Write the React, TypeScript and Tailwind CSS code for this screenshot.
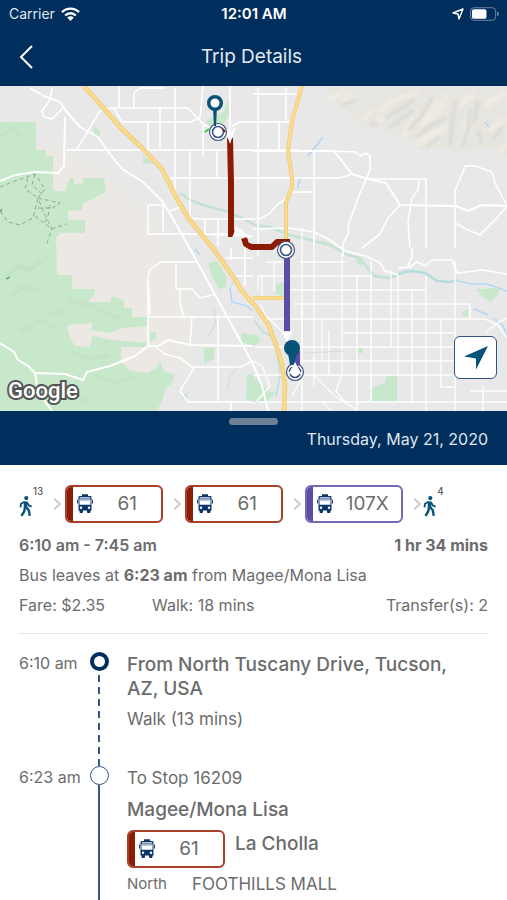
import React from 'react';

type Tone = 'red' | 'purple';

interface Leg {
  id: number;
  route: string;
  tone: Tone;
}

const LEGS: Leg[] = [
  { id: 1, route: '61', tone: 'red' },
  { id: 2, route: '61', tone: 'red' },
  { id: 3, route: '107X', tone: 'purple' },
];

const MAJOR_ROADS = [
  'M30 2 44 10 60 16 66 25 80 41 98 51 110 68 122 83 143 96 163 116 180 145 195 172 213 205 235 245 253 278 262 300 268 325',
  'M0 95 15 89 35 86 58 87 64 80 65 31',
  'M0 257 14 266 18 274 28 280 35 287 65 288 83 294 87 286 110 280 135 270 148 260 158 260 168 254 190 259 253 260',
  'M35 287 38 305 45 315 52 325',
  'M253 65H334L352 88 368 93 386 97 400 119 456 120 468 125 482 119 507 120',
];

const ROADS = [
  'M52 2 50 14 42 25 44 31 52 33 63 22',
  'M77 63 100 25 112 22H188L204 39 215 43',
  'M119 0V22M134 22V7L140 2H165M114 22 122 36H190L200 32 203 0M148 36V64M160 22V64',
  'M175 2V110M190 64V133M203 70V40M217 64V92M230 0V150M66 64H300M170 92H288M232 40 240 36H290',
  'M148 119H163V145M148 119V148H200M168 126 180 121M205 133V148H240M218 133V160M200 148 253 150',
  'M175 110 190 132 200 133 230 133 253 133 260 133 270 127 278 118 286 113',
  'M258 2V170M286 2V36M279 36V64M253 8H297M253 92H340L352 88M292 106H314M314 66V160',
  'M334 65 356 66 360 70 366 67 370 70 370 84 366 93 357 115 348 140 349 146 343 158 343 170',
  'M368 93H426V162M419 94 418 104 412 112 408 135 410 161M400 119 388 132 380 148 362 162',
  'M455 162V105L463 86 465 80 475 80 492 86 495 97 507 120 497 132 480 149 468 144 455 137',
  'M148 260V192L150 228M148 190 150 184 160 176H197M176 176V203L180 204 180 218 184 232M176 203H192L200 212 215 208',
  'M148 231H253M192 231 190 258M218 232V316M155 260 165 268 180 272 192 281H240L253 275M194 282 180 305 188 316H253M231 316V325',
  'M225 172H253M230 190H253M231 162V174M245 162V200',
  'M253 143 290 142 314 146 330 154 345 165 366 170 380 177 385 185 398 189',
  'M408 180 412 170 412 162M398 182 410 181 417 176 425 180 432 174H452L457 187 483 184 507 188',
];

const CITY_GRID = [
  'M300 176H345M288 190H372M290 204H426M294 218H470M265 233H485L498 239 507 252M343 247H455M255 261H455M300 275H475M297 289H455M258 316H507',
  'M302 142V310M314 150V300M322 234V275M329 244V289M342 168V289M357 190V325M371 175V316M391 185V261M398 188V289M412 204V316M426 190V325M441 233V301H455M455 175V325M470 218V233M483 300V325',
  'M314 289 335 310 358 325M342 289 336 305 345 316M253 289H282M260 218 266 230 284 247M262 190V214M274 176V205M302 218V260M253 275 262 280 270 300 254 318',
  'M485 247 497 237 507 232M470 305H507M302 300V325M292 310 300 295M322 316 332 325M258 204V190H284M266 176H284',
];

const I10 =
  'M84 0 100 18 120 41 141 61 162 83 176 111 189 133 202 149 215 165 234 192 242 205 256 221 268 238 276 259 282 278 285 298 284 325';
const ORACLE_ROAD = 'M302 0 292 35 288 65 292 92 292 101 286 117 286 160M253 212H285';

const BusIcon = () => (
  <svg className="h-5 w-4 shrink-0" viewBox="0 0 16 20" aria-hidden="true">
    <path fill="#0b3568" d="M5 0.300h6v1.700h2.500q1 0 1 1V16.500h-1V18q0 1-1 1H11q-1 0-1-1V16.500H6V18q0 1-1 1H3.500q-1 0-1-1V16.500h-1V3q0-1 1-1H5z" />
    <path fill="#eef3f8" d="M2.700 3.200h10.600v1.300H2.700z" />
    <path fill="#fff" d="M2.500 5.500h11v5.300h-11z" />
    <path fill="#b9c8da" d="M2.500 5.500h11v1.500h-11z" />
    <path fill="#0b3568" d="M0 5.500h.9v4H0zM15.100 5.500h.9v4h-.9z" />
    <circle cx="4" cy="13.700" r="1.200" fill="#fff" />
    <circle cx="12" cy="13.700" r="1.200" fill="#fff" />
  </svg>
);

const WalkIcon = () => (
  <svg className="h-[22px] w-[14px]" viewBox="0 0 15 24" aria-hidden="true">
    <circle cx="7.800" cy="3.300" r="2.300" fill="#075379" />
    <g fill="none" stroke="#075379" strokeLinejoin="round">
      <path strokeWidth="4" d="M7 7v7" />
      <path strokeWidth="2" d="M6 7.300 2 9.500 1.500 13.500M8.500 8l2.200 3.500 3 1.200" />
      <path strokeWidth="2.600" d="M6.500 13.500 5.500 18l-3 4.700M8 13.500l2.700 3.500.8 5.700" />
    </g>
  </svg>
);

const Chevron = () => (
  <svg className="h-3 w-2 shrink-0" viewBox="0 0 8 12" fill="none" stroke="#bdbdbd" strokeWidth="1.500" aria-hidden="true">
    <path d="M1 0.500 7 6l-6 5.500" />
  </svg>
);

const WalkLeg: React.FC<{ minutes: number }> = ({ minutes }) => (
  <div className="flex h-full items-start">
    <div className="pt-2.5">
      <WalkIcon />
    </div>
    <span className="text-[10px] leading-3 text-[#444]">{minutes}</span>
  </div>
);

const RouteBadge: React.FC<{ route: string; tone: Tone }> = ({ route, tone }) => (
  <div
    className={`flex h-[38px] w-[98px] shrink-0 items-center overflow-hidden rounded-md border-2 bg-white ${
      tone === 'red' ? 'border-[#a64029]' : 'border-[#7468b7]'
    }`}
  >
    <span className={`h-full w-[6px] ${tone === 'red' ? 'bg-[#8a1b04]' : 'bg-[#594ca3]'}`} />
    <span className="ml-1">
      <BusIcon />
    </span>
    <span className="flex-1 text-center text-[19px] text-[#6c6c6c]">{route}</span>
  </div>
);

const StopMarker: React.FC<{ x: number; y: number }> = ({ x, y }) => (
  <g fill="#fff" stroke="#3c5582">
    <circle cx={x} cy={y} r="8.500" strokeWidth="1.200" />
    <circle cx={x} cy={y} r="5.500" strokeWidth="1.600" />
  </g>
);

const MapView = () => (
  <section aria-label="Trip map" className="relative">
    <svg className="block w-full" viewBox="0 0 507 325" aria-hidden="true">
      <defs>
        <filter id="soft" x="-10%" y="-10%" width="120%" height="120%">
          <feGaussianBlur stdDeviation="1.200" />
        </filter>
        <filter id="wide" x="-20%" y="-20%" width="140%" height="140%">
          <feGaussianBlur stdDeviation="8" />
        </filter>
      </defs>
      <rect width="507" height="325" fill="#e8e8e8" />
      <path fill="#ece9e4" filter="url(#wide)" d="M0 55 60 60 105 90 150 130 180 185 190 250 180 290 100 300 0 250z" />

      {/* Mountains */}
      <g filter="url(#soft)">
        <path fill="#e6e5df" d="M322 2H507V72L490 60 470 66 440 62 420 64 405 52 385 45 360 38 345 22z" />
        <g fill="none" stroke="#edebe2" strokeWidth="5">
          <path d="M327 14 345 5M343 18 352 6M362 35 372 24M378 26 398 12 420 6M376 36 384 32M402 50 418 36 438 26 448 10M415 60 432 50 448 42M424 32 440 14M460 20 474 8M463 44 470 30M484 22 506 6M488 44 506 32M497 68 507 58" />
        </g>
        <g fill="none" stroke="#dedcd6" strokeWidth="4">
          <path d="M340 20 356 14M370 40 378 36M386 32 402 22 414 14M390 42 402 32 414 24M408 44 422 30 432 12M416 52 430 40 446 32M426 62 440 50M450 60 452 36 456 14M462 62 468 44 470 22M474 36 478 14M482 58 478 44M492 54 502 42" />
        </g>
        <g fill="none" stroke="#f0eee6" strokeWidth="2">
          <path d="M406 42 414 30M420 40 438 30M412 56 446 40M380 22 394 14M486 16 500 8M440 10 446 6M464 14 468 8" />
        </g>
      </g>

      {/* Parks */}
      <g fill="#c7e8ca">
        <path d="M0 36H36V64H46V70H53V105H66V102L70 92H74V98H83V92H104L106 106 95 112 82 118V124L68 125V134H85V147H60L56 152 57 189H72V203H95V207L88 216H110L112 210 124 214V222H132V231H148V240L122 242 110 247 92 244V237L67 239 70 252 75 260 90 261 92 250 112 254 148 257 145 261H121V275L130 285 148 287 156 282 160 275 164 286 175 288 172 297 165 303 162 316 156 325H0z" />
        <path d="M208 177 217 175 226 190 226 201 219 203 212 190zM204 262H214V273L204 278zM150 246H156V252L150 256zM247 289 254 287V315L246 314zM242 246 254 250V260L240 256zM187 306V315L182 312z" />
        <path d="M206 35 224 25 228 12 229 28 221 43 209 42zM143 70 155 78 143 77zM93 39 100 46 99 52 94 47z" />
        <path d="M253 290 268 305 276 307 278 302 268 315 253 316zM276 199 284 196V211L276 208zM253 248 261 252 257 259H253zM372 302 386 296V289H397V315H372zM357 262H363V267H357zM476 203 500 202 497 210 490 216 482 210zM462 226 468 223V231L462 229zM357 172 364 175 361 181 356 176zM322 154 328 157 325 160z" />
      </g>
      <g fill="none" stroke="#b5d8b7" strokeWidth="3" opacity=".35" filter="url(#soft)">
        <path d="M0 50 12 43 20 50M5 190 20 180 30 184 48 170M70 265 85 272 110 270M78 310 90 316M70 215 90 219 120 233M10 210 25 200 38 205M20 245 40 235 58 242M95 290 115 296 135 292M50 230 65 224" />
      </g>
      <g fill="none" stroke="#86ae8c" strokeWidth="1" strokeDasharray="4 3">
        <path d="M0 101 15 95 35 88 45 103 38 112 44 127 52 143 46 160M28 92 25 103 38 112 33 132 20 139 8 136 1 126M38 112 60 117 52 122 35 122M35 88 32 99 42 108M35 130 52 143 66 138M50 119 48 130 44 138" />
      </g>
      <path d="M6 193 10 191M0 126 2 123" stroke="#6da87a" strokeWidth="1.500" />

      {/* Rivers */}
      <g fill="none">
        <path stroke="#c3e2d2" strokeWidth="2.500" d="M180 107 188 113 203 119 225 125 240 131 255 139 270 141 290 149 315 155 330 159 348 169 360 172 369 184 375 190 389 192" />
        <path stroke="#b5dcdd" strokeWidth="2.500" d="M389 192 404 186 413 185 425 187 437 195 449 196 458 194" />
        <path stroke="#b2d6f5" strokeWidth="1.500" d="M458 195 472 198 487 198 507 205M474 223 488 229M493 232 503 240 507 249M308 70 323 51M297 102 301 91M485 36 489 41M230 202 232 216 247 220 253 225M195 163 200 169" />
        <path stroke="#c3dcf2" strokeWidth="1" d="M236 190 230 202M214 221 216 237 208 251M227 304 230 290 238 281" />
        <path stroke="#c4e0d8" strokeWidth="2" d="M254 234 262 245 274 252 277 264 280 290 276 310" />
      </g>

      {/* Streets */}
      <g fill="none" stroke="#fff" strokeLinejoin="round">
        {CITY_GRID.map((d) => (
          <path key={d} d={d} strokeWidth="1.400" opacity=".9" />
        ))}
        {ROADS.map((d) => (
          <path key={d} d={d} strokeWidth="1.600" />
        ))}
        {MAJOR_ROADS.map((d) => (
          <path key={d} d={d} strokeWidth="2" />
        ))}
      </g>
      <path d="M305 267 345 265" stroke="#dadada" />

      {/* Highways */}
      <g fill="none" strokeLinejoin="round">
        <g stroke="#ecc976">
          <path d={I10} strokeWidth="4.600" />
          <path d={ORACLE_ROAD} strokeWidth="4" />
        </g>
        <g stroke="#fbdb8b">
          <path d={I10} strokeWidth="3" />
          <path d={ORACLE_ROAD} strokeWidth="2.800" />
        </g>
      </g>

      {/* Planned route */}
      <path d="M205 46 209 43M213 42 217 39" stroke="#27d63c" strokeWidth="2" />
      <path fill="none" stroke="#8a1b04" strokeWidth="6" strokeLinejoin="round" d="M230 52 231 96 231 149" />
      <path fill="#8a1b04" d="M228 145 237 144 232 151 228 151z" />
      <path fill="none" stroke="#8a1b04" strokeWidth="6" strokeLinejoin="round" d="M244 152 246 158 251 161 272 161 277 156 290 156" />
      <path fill="#fff" d="M224 41 230 46 236 40 230 58zM236 140 252 152 233 150z" />
      <path fill="none" stroke="#5b4da6" strokeWidth="6" d="M287 165V245" />
      <path fill="#fff" d="M281 244 287 247 293 244 287 257z" />
      <StopMarker x={218} y={46} />
      <path d="M223 43 225 46" stroke="#8a1b04" strokeWidth="2" />
      <StopMarker x={286} y={164} />
      <StopMarker x={295} y={286} />
      <path fill="#0a5278" d="M213 22h4l-1 18h-2z" />
      <circle cx="215" cy="17" r="6.300" fill="#fff" stroke="#0a5278" strokeWidth="3.500" />
      <path fill="#5b4da6" d="M294 265H300V279L294 282z" />
      <path fill="#0a5278" d="M288 267h9l-3 12h-4z" />
      <circle cx="292" cy="262" r="8" fill="#0a5278" />
      <path fill="#fff" d="M295 276 302 289 295 285 288 289z" />
    </svg>
    <span className="absolute bottom-1 left-2 font-[Roboto,sans-serif] text-[22px] leading-8 font-medium text-white [-webkit-text-stroke:4px_#555] [paint-order:stroke_fill]">
      Google
    </span>
    <button
      type="button"
      aria-label="Center map on my location"
      className="absolute right-[10px] bottom-8 flex size-[43px] items-center justify-center rounded-md border-[1.5px] border-[#31537f] bg-white"
    >
      <svg className="size-6" viewBox="0 0 24 24" aria-hidden="true">
        <path fill="#075379" d="M24 0 12 23.500V12.500L0 10.500z" />
      </svg>
    </button>
  </section>
);

const StatusBar = () => (
  <div className="grid h-7 grid-cols-3 items-center pr-2 pl-[9px] text-sm">
    <div className="flex items-center gap-1.5 text-[#dfe6ee]">
      <span>Carrier</span>
      <svg className="h-[14px] w-[19px]" viewBox="0 0 19 14" fill="none" stroke="#fff" strokeWidth="2.400" aria-hidden="true">
        <path d="M1 5.200a12 12 0 0 1 17 0M4.200 8.500a7.500 7.500 0 0 1 10.600 0" />
        <path fill="#fff" stroke="none" d="M6.300 10.700a4.500 4.500 0 0 1 6.400 0L9.500 14z" />
      </svg>
    </div>
    <span className="text-center text-[15px] font-semibold text-white">12:01 AM</span>
    <div className="flex items-center justify-end gap-1.5">
      <svg className="size-3" viewBox="0 0 12 12" fill="none" stroke="#fff" strokeWidth="1.400" strokeLinejoin="round" aria-hidden="true">
        <path d="M11 1 7 11 6 6 1 5z" />
      </svg>
      <svg className="h-[14px] w-[29px]" viewBox="0 0 30 14" aria-hidden="true">
        <rect x=".5" y=".5" width="26" height="13" rx="3.500" fill="none" stroke="#71869e" />
        <rect x="2" y="2" width="15" height="10" rx="2" fill="#fff" />
        <path fill="#71869e" d="M28 4.500q2 1 2 2.500t-2 2.500z" />
      </svg>
    </div>
  </div>
);

const App: React.FC = () => {
  return (
    <div className="flex min-h-screen flex-col bg-white font-['Inter','Liberation_Sans',sans-serif] text-[#6c6c6c]">
      <header className="bg-[#002e5d]">
        <StatusBar />
        <div className="grid h-[58px] grid-cols-[48px_1fr_52px] items-center">
          <button type="button" aria-label="Back" className="flex h-full items-center pl-[19px]">
            <svg className="h-6 w-[14px]" viewBox="0 0 14 24" fill="none" stroke="#fff" strokeWidth="2" aria-hidden="true">
              <path d="M13 1 2 12l11 11" />
            </svg>
          </button>
          <h1 className="text-center text-[19px] leading-6 text-[#e3e9f0]">Trip Details</h1>
        </div>
      </header>

      <MapView />

      <div className="flex h-[54px] flex-col bg-[#002e5d] px-[19px] pt-[7px]">
        <div className="h-[7px] w-[49px] self-center rounded-full bg-[#6d8096]" />
        <p className="pt-0.5 text-right leading-6 text-[#dfe6ee]">Thursday, May 21, 2020</p>
      </div>

      <main className="flex flex-1 flex-col px-[19px] pt-5">
        <div className="flex h-[38px] items-center">
          <WalkLeg minutes={13} />
          {LEGS.map((leg) => (
            <React.Fragment key={leg.id}>
              <span className="mr-1 ml-2.5">
                <Chevron />
              </span>
              <RouteBadge route={leg.route} tone={leg.tone} />
            </React.Fragment>
          ))}
          <span className="mr-0.5 ml-2.5">
            <Chevron />
          </span>
          <WalkLeg minutes={4} />
        </div>

        <div className="flex justify-between pt-2.5 leading-6">
          <span className="font-semibold">6:10 am - 7:45 am</span>
          <span className="font-bold">1 hr 34 mins</span>
        </div>
        <p className="pt-1.5 leading-6">
          Bus leaves at <strong className="font-bold">6:23 am</strong> from Magee/Mona Lisa
        </p>
        <div className="flex pt-1.5 leading-6">
          <span className="w-[133px]">Fare: $2.35</span>
          <span>Walk: 18 mins</span>
          <span className="ml-auto">Transfer(s): 2</span>
        </div>
        <hr className="mt-4 border-[#e4e4e4]" />

        <ol className="flex flex-1 flex-col pt-[18px]">
          <li className="grid grid-cols-[61px_38px_1fr]">
            <time className="pt-px leading-5 whitespace-nowrap">6:10 am</time>
            <div className="flex flex-col items-center">
              <span className="size-[19px] rounded-full border-4 border-[#002e5d]" />
              <span className="mt-1 w-0.5 flex-1 bg-[repeating-linear-gradient(#33568a_0_7px,transparent_7px_12px)]" />
            </div>
            <div className="pr-4 pb-[35px] pl-[9px]">
              <h2 className="pt-px text-[19px] leading-6 font-medium">From North Tuscany Drive, Tucson, AZ, USA</h2>
              <p className="pt-1.5 text-[17px] leading-6">Walk (13 mins)</p>
            </div>
          </li>
          <li className="grid flex-1 grid-cols-[61px_38px_1fr]">
            <time className="pt-px leading-5 whitespace-nowrap">6:23 am</time>
            <div className="flex flex-col items-center">
              <span className="size-[19px] rounded-full border-[1.5px] border-[#33568a]" />
              <span className="w-0.5 flex-1 bg-[#33568a]" />
            </div>
            <div className="pl-[9px]">
              <p className="text-[17px] leading-6">To Stop 16209</p>
              <h2 className="pt-2 text-[19px] leading-6 font-medium">Magee/Mona Lisa</h2>
              <div className="flex items-start gap-2.5 pt-2">
                <RouteBadge route="61" tone="red" />
                <span className="pt-0.5 text-[19px] leading-6 font-medium">La Cholla</span>
              </div>
              <div className="flex items-center gap-[25px] pt-1 leading-6">
                <span className="text-[15px]">North</span>
                <span className="text-[17px]">FOOTHILLS MALL</span>
              </div>
            </div>
          </li>
        </ol>
      </main>
    </div>
  );
};

export default App;
